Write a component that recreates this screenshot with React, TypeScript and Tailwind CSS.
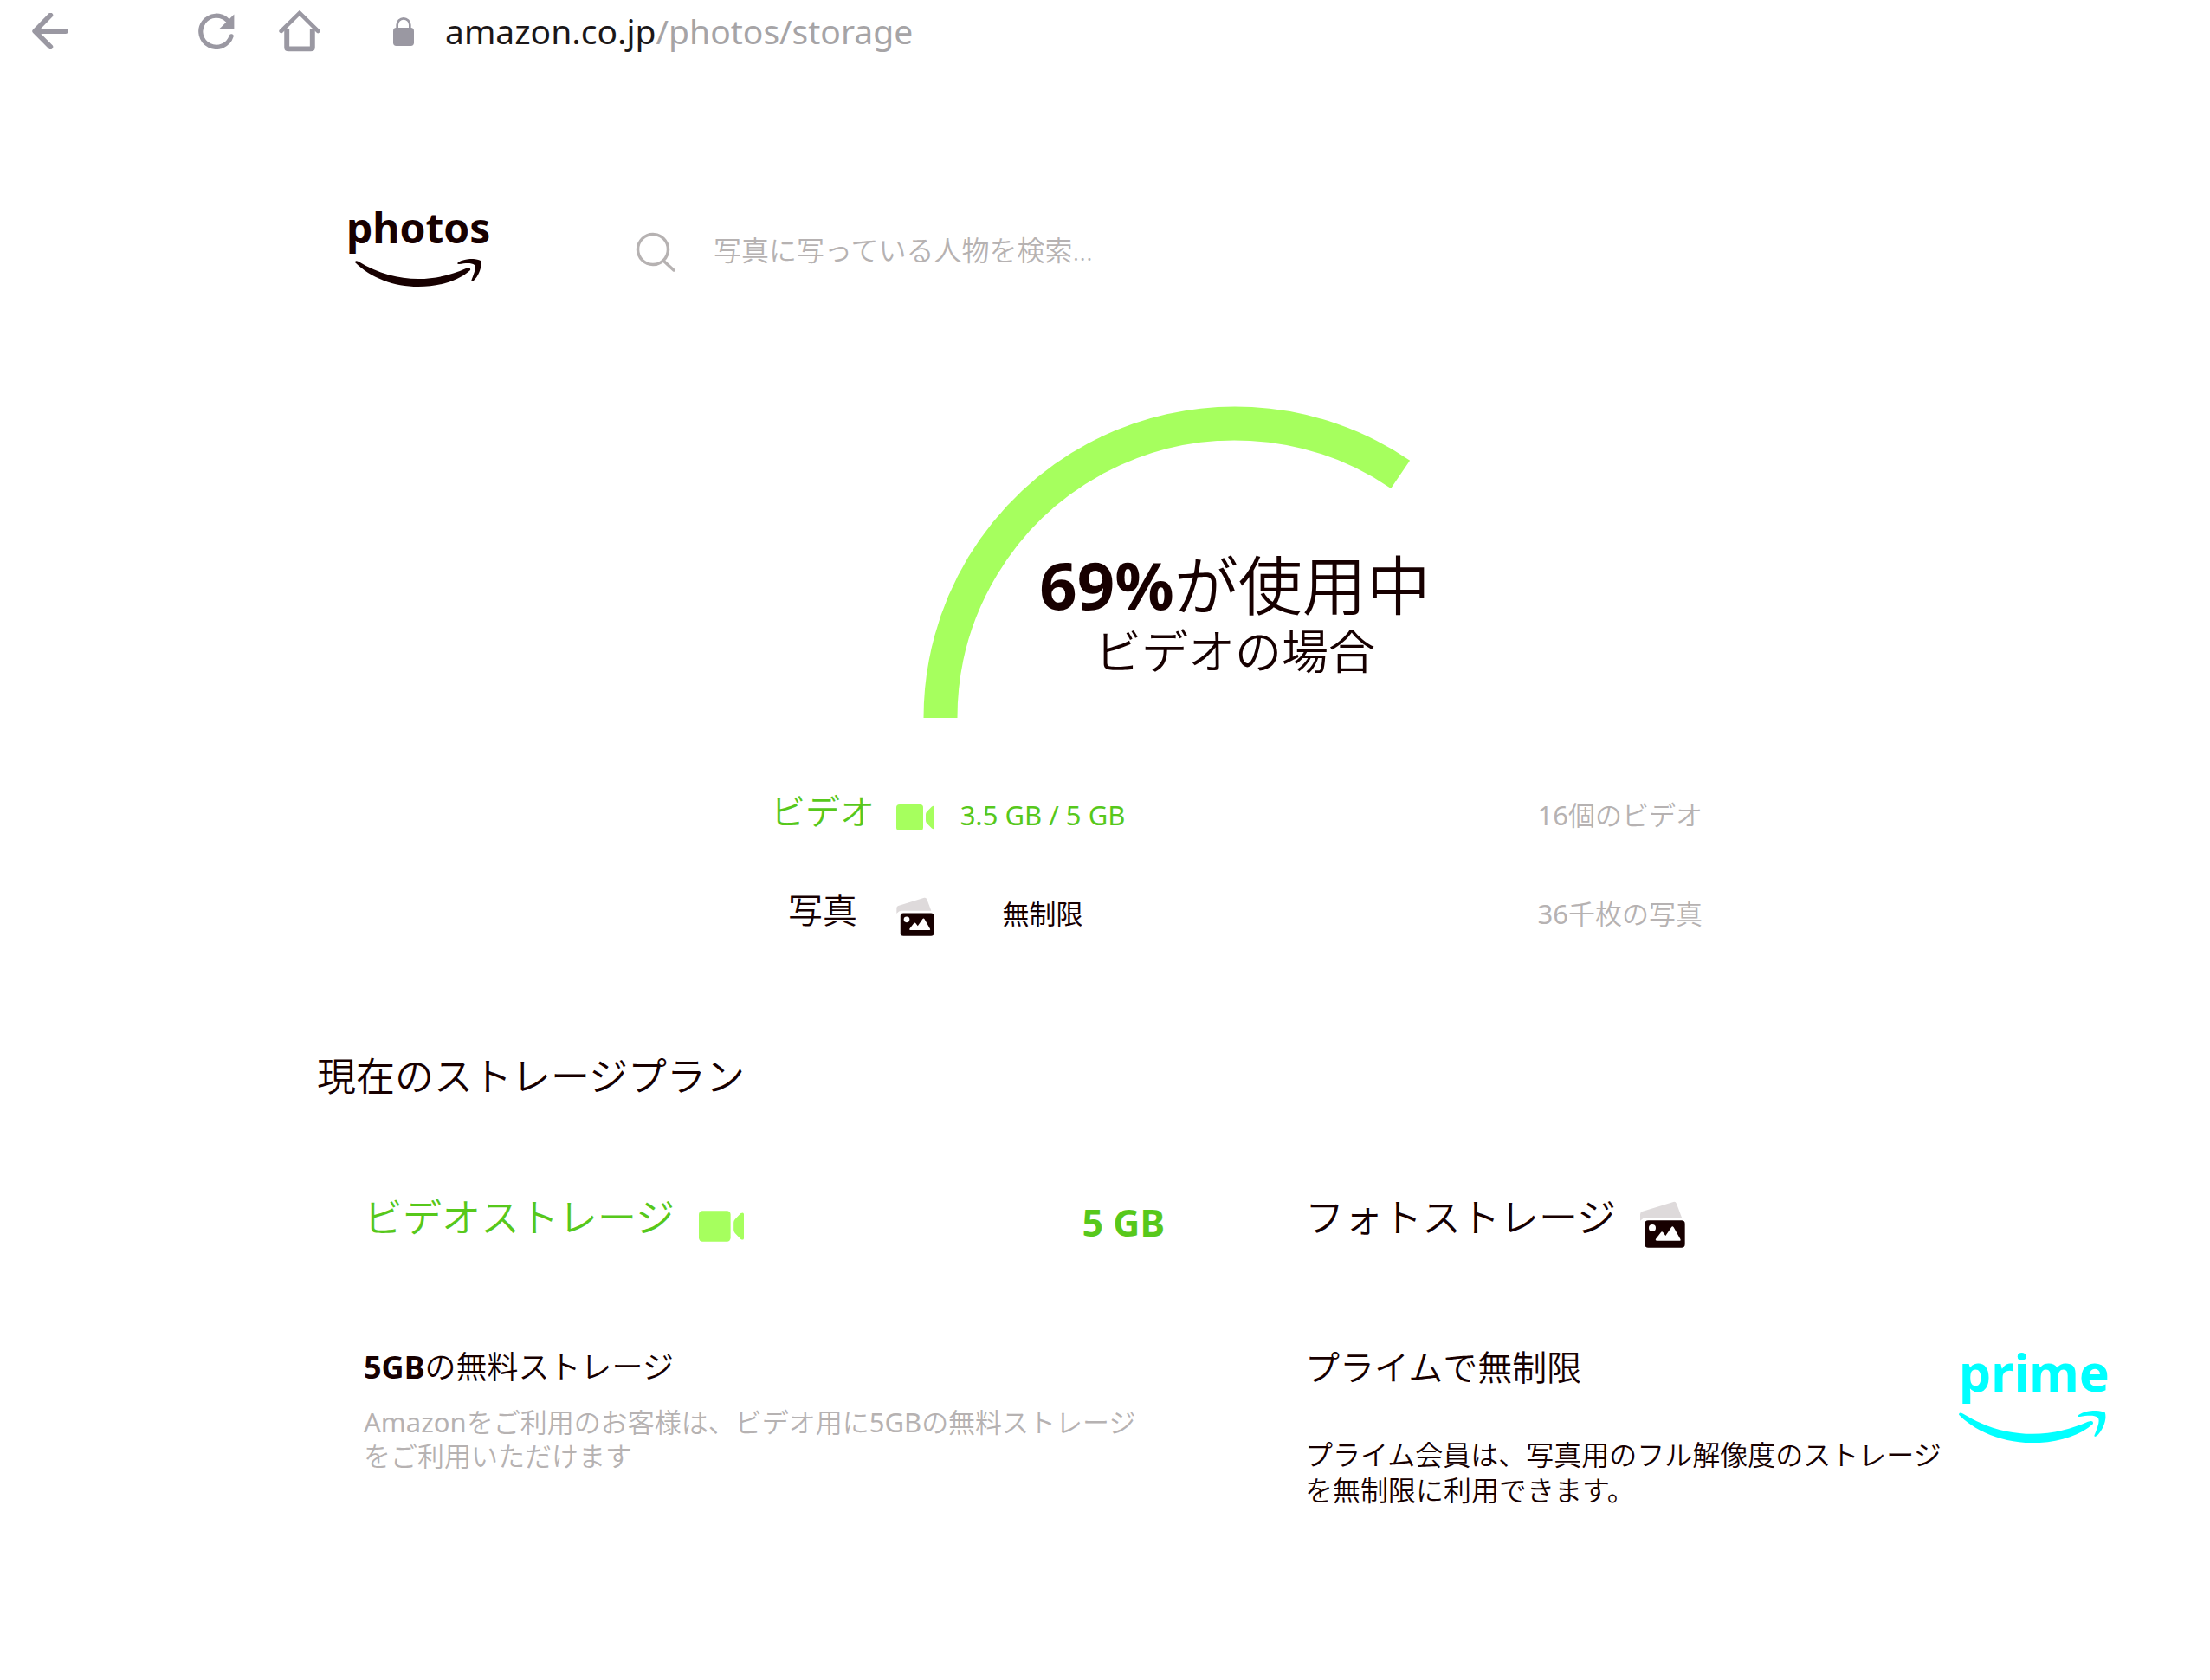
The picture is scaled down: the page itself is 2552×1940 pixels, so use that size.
import type { ReactNode } from "react";

// =========================================
// ICONS
// =========================================
const BackIcon = () => (
    <svg viewBox="20 19 128 130" className="w-[42px] h-[42px]" fill="none" stroke="currentColor" strokeWidth="18" strokeLinecap="round" strokeLinejoin="round" aria-hidden="true">
        <path d="M85 27 29 84l56 56M31 84h108" />
    </svg>
);

const ReloadIcon = () => (
    <svg viewBox="596 19 128 130" className="w-[42px] h-[42px]" fill="none" stroke="currentColor" strokeWidth="16" strokeLinecap="round" aria-hidden="true">
        <path d="M713 102A56 56 0 1 1 700 46" />
        <path d="M723 24v51h-52z" fill="currentColor" stroke="none" />
    </svg>
);

const HomeIcon = () => (
    <svg viewBox="875 12 146 146" className="w-12 h-12" fill="none" stroke="currentColor" strokeLinecap="round" aria-hidden="true">
        <path d="M883 85l65-64 65 64" strokeWidth="14" />
        <path d="M903 76v65q0 6 6 6h78q6 0 6-6V76" strokeWidth="18" strokeLinecap="butt" />
    </svg>
);

const LockIcon = () => (
    <svg viewBox="1272 30 72 99" className="w-6 h-[33px]" fill="none" aria-hidden="true">
        <rect x="1272" y="66" width="72" height="63" rx="11" fill="currentColor" />
        <path d="M1286 70V56a22 22 0 0 1 44 0v14" stroke="currentColor" strokeWidth="8" />
    </svg>
);

const SearchIcon = () => (
    <svg viewBox="0 0 46 46" className="w-[46px] h-[46px] shrink-0" fill="none" stroke="currentColor" strokeWidth="3.5" strokeLinecap="round" aria-hidden="true">
        <circle cx="20" cy="20" r="17.5" />
        <path d="M32 33l12 11" />
    </svg>
);

const VideoIcon = ({ className }: { className: string }) => (
    <svg viewBox="0 0 44 30" className={className} fill="#a6ff5e" aria-hidden="true">
        <rect width="31" height="30" rx="3.5" />
        <path d="M34 11.500q0-2 1.300-3.300L41 2.400q3-1.500 3 1v23.200q0 2.500-3 1l-5.700-5.800q-1.300-1.300-1.300-3.300z" />
    </svg>
);

const PhotoIcon = ({ className }: { className: string }) => (
    <svg viewBox="18 20 156 162" className={className} aria-hidden="true">
        <path d="M18 88V66q0-8 7-10l108-33q8-2 11 6l18 48H38q-10 0-20 11z" fill="#dedadb" />
        <rect x="34" y="87" width="139" height="94" rx="12" fill="#170000" />
        <circle cx="60" cy="113" r="12" fill="#fff" />
        <path d="M75 157q-6-1-3-6l18-23q3-4 7 0l9 12 20-29q4-6 8 0l23 40q3 6-3 6z" fill="#fff" />
    </svg>
);

const Smile = ({ className }: { className: string }) => (
    <svg viewBox="0 0 146 32" className={className} fill="currentColor" aria-hidden="true">
        <path d="M0 4Q0 1 4 3C27 17 50 23 73 23c21 0 39-5 55-12q6-2 5 2C120 25 97 32 73 32 45 32 18 22 0 4z" />
        <path d="M119 4c8-5 20-5 26-2 2 7-2 17-8 23q-4 2-2-2c3-8 5-13 3-16-4-3-11-2-18-1q-3 0-1-2z" />
    </svg>
);

// =========================================
// BROWSER BAR
// =========================================
const BrowserBar = () => (
    <nav className="flex h-[72px] items-center pl-[37px] text-[#9a98a2]">
        <button type="button" aria-label="戻る">
            <BackIcon />
        </button>
        <button type="button" aria-label="再読み込み" className="ml-[150px]">
            <ReloadIcon />
        </button>
        <button type="button" aria-label="ホーム" className="ml-[51px]">
            <HomeIcon />
        </button>
        <a href="#" className="ml-[84px] flex items-center gap-[36px] text-[39px] font-normal leading-[48px] text-[#a6a4a6]">
            <span className="text-[#9a98a2]">
                <LockIcon />
            </span>
            <span>
                <span className="text-[#1b1718]">amazon.co.jp</span>/photos/storage
            </span>
        </a>
    </nav>
);

// =========================================
// USAGE GAUGE
// =========================================
const UsageGauge = ({ percent }: { percent: number }) => {
    const angle = Math.PI * (1 - percent / 100);
    const x = 360 + 340 * Math.cos(angle);
    const y = 360 - 340 * Math.sin(angle);

    return (
        <section className="relative mx-auto mt-[138px] w-[720px]">
            <svg viewBox="0 0 720 360" className="block w-full" fill="none" aria-hidden="true">
                <path d={`M20 360A340 340 0 0 1 ${x} ${y}`} stroke="#a6ff5e" strokeWidth="39" />
            </svg>
            <div className="absolute inset-x-0 bottom-[45px] text-center">
                <p className="text-[74px] leading-[80px]">
                    <b className="text-[76px] font-bold">{percent}%</b>が使用中
                </p>
                <p className="mt-1 text-[54px] leading-[64px]">ビデオの場合</p>
            </div>
        </section>
    );
};

type UsageRowProps = {
    label: string;
    icon: ReactNode;
    value: string;
    count: number;
    unit: string;
    color?: string;
};

const UsageRow = ({ label, icon, value, count, unit, color }: UsageRowProps) => (
    <li className={`flex h-12 items-center ${color ?? ""}`}>
        <span className="w-32 pb-2 text-center text-[40px] leading-[48px]">{label}</span>
        <span className="ml-[21px] pt-1.5">{icon}</span>
        <span className="ml-[20px] w-[210px] text-center text-[31px] font-normal leading-[40px]">{value}</span>
        <span className="ml-auto text-[31px] leading-[40px] text-[#b6b2b2]">
            <span className="font-normal">{count}</span>
            {unit}
        </span>
    </li>
);

// =========================================
// PLAN CARDS
// =========================================
const VideoPlan = () => (
    <article className="px-[54px]">
        <div className="flex h-14 items-center text-[#57c81b]">
            <h3 className="pb-3 text-[45px] leading-[56px]">ビデオストレージ</h3>
            <VideoIcon className="ml-7 mt-2 w-[52px] h-[36px]" />
            <b className="ml-auto text-[43px] font-bold leading-[56px]">5 GB</b>
        </div>
        <h4 className="mt-[115px] text-[36px] leading-[48px]">
            <b className="font-bold">5GB</b>の無料ストレージ
        </h4>
        <p className="mt-5 max-w-[910px] text-[31px] leading-[39px] text-[#b6b2b2]">
            <span className="font-normal">Amazon</span>をご利用のお客様は、ビデオ用に
            <span className="font-normal">5GB</span>の無料ストレージをご利用いただけます
        </p>
    </article>
);

const PhotoPlan = () => (
    <article className="px-[54px]">
        <div className="flex h-14 items-center">
            <h3 className="pb-3 text-[45px] leading-[56px]">フォトストレージ</h3>
            <PhotoIcon className="ml-7 mt-1 w-[52px] h-[54px]" />
        </div>
        <div className="mt-[115px] flex gap-4">
            <div className="flex-1">
                <h4 className="text-[40px] leading-[48px]">プライムで無制限</h4>
                <p className="mt-14 text-[32px] leading-[41px]">
                    プライム会員は、写真用のフル解像度のストレージを無制限に利用できます。
                </p>
            </div>
            <div className="w-[170px] shrink-0 text-[#00ffff]">
                <b className="block text-center text-[59px] font-bold leading-[58px]">prime</b>
                <Smile className="mt-4 w-full" />
            </div>
        </div>
    </article>
);

export default function App() {
    return (
        <div className="min-h-screen bg-white font-['Noto_Sans','Noto_Sans_CJK_JP',sans-serif] font-[350] text-[#170000]">
            <BrowserBar />

            <main className="pl-[366px] pr-[66px] pb-20">
                <header className="mt-[167px] flex">
                    <a href="#" className="ml-[34px] w-[164px]">
                        <b className="block text-center text-[48px] font-bold leading-[48px]">photos</b>
                        <Smile className="ml-[10px] mt-3 w-[146px]" />
                    </a>
                    <label className="ml-[170px] mt-3 flex flex-1 items-center gap-[44px] text-[#b6b2b2]">
                        <SearchIcon />
                        <input
                            type="search"
                            aria-label="検索"
                            placeholder="写真に写っている人物を検索..."
                            className="h-12 flex-1 bg-transparent pb-1 text-[32px] outline-none placeholder:text-[#b6b2b2]"
                        />
                    </label>
                </header>

                <UsageGauge percent={69} />

                <ul className="mx-auto mt-[88px] flex max-w-[1080px] flex-col gap-[66px]">
                    <UsageRow
                        label="ビデオ"
                        icon={<VideoIcon className="w-[44px] h-[30px]" />}
                        value="3.5 GB / 5 GB"
                        count={16}
                        unit="個のビデオ"
                        color="text-[#57c81b]"
                    />
                    <UsageRow
                        label="写真"
                        icon={<PhotoIcon className="w-[44px] h-[45px]" />}
                        value="無制限"
                        count={36}
                        unit="千枚の写真"
                    />
                </ul>

                <h2 className="mt-[136px] text-[45px] leading-[56px]">現在のストレージプラン</h2>
                <section className="mt-[113px] grid grid-cols-2 gap-[54px]">
                    <VideoPlan />
                    <PhotoPlan />
                </section>
            </main>
        </div>
    );
}
